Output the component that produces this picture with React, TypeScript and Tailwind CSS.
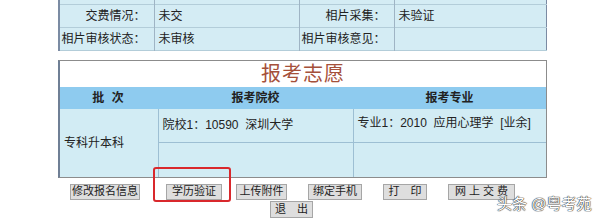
const FONT = "font-['Liberation_Sans','Noto_Sans_CJK_SC',sans-serif]"

const INFO_ROWS = [
  { a: '交费情况：', b: '未交', c: '相片采集：', d: '未验证' },
  { a: '相片审核状态：', b: '未审核', c: '相片审核意见：', d: '' },
]

const BUTTONS = [
  { label: '修改报名信息', w: 'w-[70px]', ml: 'ml-0' },
  { label: '学历验证', w: 'w-[56px]', ml: 'ml-[26px]' },
  { label: '上传附件', w: 'w-[51px]', ml: 'ml-[14px]' },
  { label: '绑定手机', w: 'w-[54px]', ml: 'ml-[21px]' },
  { label: '打　印', w: 'w-[44px]', ml: 'ml-[21px]' },
  { label: '网 上 交 费', w: 'w-[67px]', ml: 'ml-[21px]' },
]

function Btn({ label, className }: { label: string; className: string }) {
  return (
    <div
      className={`flex items-center justify-center whitespace-nowrap bg-[#dedede] border border-[#a6a6a6] text-[11px] leading-none text-[#222] ${className}`}
    >
      {label}
    </div>
  )
}

export default function App() {
  return (
    <div className={`relative w-[600px] h-[218px] overflow-hidden bg-white ${FONT}`}>
      {/* ── Basic info (cut off at top) ───────────────────────────── */}
      <div className="ml-[58px] w-[489px]">
        <table className="w-full table-fixed border-collapse bg-[#d4ecf4] text-[12px] text-[#222] border-l-2 border-l-[#7b8ba3] border-r border-r-[#7b8ba3]">
          <colgroup>
            <col className="w-[95px]" />
            <col className="w-[145px]" />
            <col className="w-[95px]" />
            <col />
          </colgroup>
          <tbody>
            <tr className="h-[4px] border-b border-[#b3cdd9]">
              <td className="border-r border-[#9fb4c4]" />
              <td className="border-r border-[#9fb4c4]" />
              <td className="border-r border-[#9fb4c4]" />
              <td />
            </tr>
            {INFO_ROWS.map((r) => (
              <tr key={r.a} className="h-[23px] border-b border-[#b3cdd9]">
                <td className="border-r border-[#9fb4c4] text-right pr-[8px] whitespace-nowrap">{r.a}</td>
                <td className="border-r border-[#9fb4c4] pl-[4px]">{r.b}</td>
                <td className="border-r border-[#9fb4c4] text-right pr-[8px] whitespace-nowrap">{r.c}</td>
                <td className="pl-[4px]">{r.d}</td>
              </tr>
            ))}
          </tbody>
        </table>
      </div>

      {/* ── 报考志愿 ───────────────────────────────────────────────── */}
      <div className="ml-[58px] mt-[9px] w-[489px] border border-[#8c8c8c] border-l-2 border-l-[#6f7f95]">
        <div className="h-[26px] flex items-center justify-center text-[20px] leading-none text-[#a5503a] tracking-[1px]">
          报考志愿
        </div>
        <table className="w-full table-fixed border-collapse text-[12px] text-[#222]">
          <colgroup>
            <col className="w-[98px]" />
            <col className="w-[195px]" />
            <col />
          </colgroup>
          <thead>
            <tr className="h-[22px] bg-[#8ecbef] font-bold">
              <th className="font-bold tracking-[2px]">批 次</th>
              <th className="font-bold">报考院校</th>
              <th className="font-bold">报考专业</th>
            </tr>
          </thead>
          <tbody className="bg-[#d2ecf4]">
            <tr className="h-[34px] border-b border-[#9dbfd3]">
              <td rowSpan={2} className="border-r border-[#9dbfd3] pl-[4px] align-middle">
                专科升本科
              </td>
              <td className="border-r border-[#9dbfd3] pl-[4px] align-middle">
                院校1：10590&nbsp;&nbsp;深圳大学
              </td>
              <td className="pl-[4px] align-top pt-[5px] whitespace-nowrap">专业1：2010&nbsp;&nbsp;应用心理学&nbsp;&nbsp;[业余]</td>
            </tr>
            <tr className="h-[34px]">
              <td className="border-r border-[#9dbfd3]" />
              <td />
            </tr>
          </tbody>
        </table>
      </div>

      {/* ── Buttons ────────────────────────────────────────────────── */}
      <div className="mt-[6px] ml-[70px] flex h-[16px]">
        {BUTTONS.map((b) => (
          <Btn key={b.label} label={b.label} className={`${b.w} ${b.ml}`} />
        ))}
      </div>
      <div className="mt-[1px] ml-[270px] flex h-[17px]">
        <Btn label="退　出" className="w-[43px]" />
      </div>

      {/* annotation box */}
      <div className="absolute left-[153px] top-[167px] w-[78px] h-[35px] rounded-[3px] border-2 border-[#d9282c]" />

      {/* watermark */}
      <div className="absolute left-[497px] top-[196px] whitespace-nowrap text-[15px] leading-none text-white [text-shadow:0_0_1px_#333,0_0_1px_#333,0_0_1px_#333]">
        头条 @粤考苑
      </div>
    </div>
  )
}
